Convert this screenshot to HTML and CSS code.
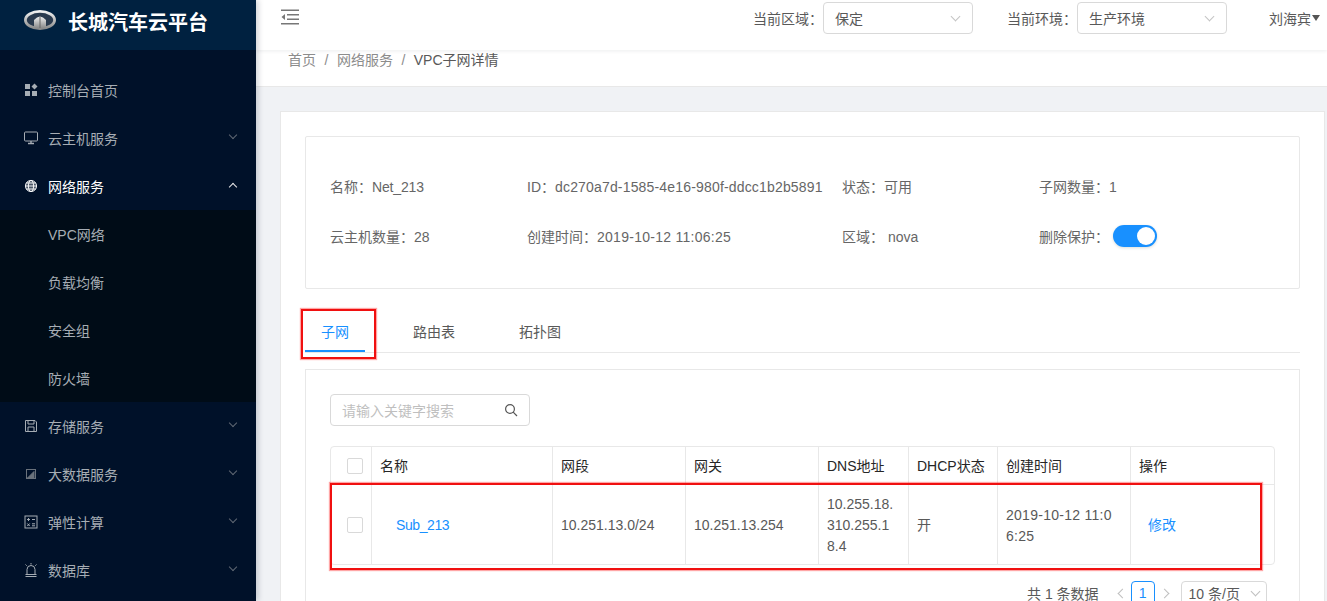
FILE: index.html
```html
<!DOCTYPE html>
<html lang="zh">
<head>
<meta charset="utf-8">
<title>长城汽车云平台</title>
<link rel="stylesheet" href="styles.css">
</head>
<body>
<div class="app">
  <aside class="sider">
    <div class="logo">
      <svg class="logo-mark" width="32" height="20" viewBox="0 0 32 20">
        <defs>
          <linearGradient id="lg" x1="0" y1="0" x2="0" y2="1"><stop offset="0" stop-color="#f0f0f0"/><stop offset="1" stop-color="#8a8a8a"/></linearGradient>
        </defs>
        <ellipse cx="16" cy="10" rx="14.6" ry="8.6" fill="#2a3a4e" stroke="url(#lg)" stroke-width="2.8"/>
        <path d="M10 18 V10 Q16 3 22 10 V18 Z" fill="url(#lg)"/>
        <path d="M16 6 V18" stroke="#666" stroke-width="1"/>
      </svg>
      <span class="logo-text">长城汽车云平台</span>
    </div>
    <nav class="menu">
      <a class="item"><svg class="ico" viewBox="0 0 14 14"><rect x="1" y="1" width="5" height="5" fill="#a6adb4"/><path d="M10.5 0.5 L13.5 3.5 L10.5 6.5 L7.5 3.5 Z" fill="#a6adb4"/><rect x="1" y="8" width="5" height="5" fill="#a6adb4"/><rect x="8" y="8" width="5" height="5" fill="#a6adb4"/></svg><span>控制台首页</span></a>
      <a class="item"><svg class="ico" viewBox="0 0 14 14" fill="none" stroke="#a6adb4"><rect x="0.5" y="1" width="13" height="9" rx="1"/><path d="M4 12.5 H10 M7 10 V12.5" stroke-width="1.4"/></svg><span>云主机服务</span><i class="caret"></i></a>
      <a class="item open"><svg class="ico" viewBox="0 0 14 14" fill="none" stroke="#fff" stroke-width="0.9"><circle cx="7" cy="7" r="5.6" fill="#d8dadc" fill-opacity="0.35"/><ellipse cx="7" cy="7" rx="2.6" ry="5.6"/><path d="M1.4 7 H12.6 M2.2 4 H11.8 M2.2 10 H11.8"/></svg><span>网络服务</span><i class="caret up"></i></a>
      <div class="sub">
        <a class="sub-item">VPC网络</a>
        <a class="sub-item">负载均衡</a>
        <a class="sub-item">安全组</a>
        <a class="sub-item">防火墙</a>
      </div>
      <a class="item"><svg class="ico" viewBox="0 0 14 14" fill="none" stroke="#a6adb4"><path d="M1.5 1.5 H11 L12.5 3 V12.5 H1.5 Z"/><path d="M4 1.5 V5 H10 V1.5 M4 12.5 V8 H10 V12.5"/></svg><span>存储服务</span><i class="caret"></i></a>
      <a class="item"><svg class="ico" viewBox="0 0 14 14" fill="none" stroke="#6a727c"><rect x="2.5" y="2.5" width="9" height="9"/><path d="M3.5 11 L10 4.5 V11 Z" fill="#6a727c"/></svg><span>大数据服务</span><i class="caret"></i></a>
      <a class="item"><svg class="ico" viewBox="0 0 14 14" fill="none" stroke="#a6adb4"><rect x="1" y="1" width="12" height="12"/><path d="M3 4.5 H6 M4.5 3 V6 M8 4.5 H11 M3.3 8.5 L5.7 11 M5.7 8.5 L3.3 11 M8 8.8 H11 M8 10.8 H11"/></svg><span>弹性计算</span><i class="caret"></i></a>
      <a class="item"><svg class="ico" viewBox="0 0 14 14" fill="none" stroke="#a6adb4"><path d="M3 11 V6.5 A4 4 0 0 1 11 6.5 V11 M1.5 11.5 H12.5 M1.5 13.5 H12.5 M7 0 V1.5 M1.5 1.5 L2.7 2.7 M12.5 1.5 L11.3 2.7"/></svg><span>数据库</span><i class="caret"></i></a>
    </nav>
  </aside>
  <div class="main">
    <header class="topbar">
      <svg class="fold" width="18" height="16" viewBox="0 0 18 16"><path d="M0 0.5 H18 V2 H0 Z M6 5 H18 V6.5 H6 Z M6 9.5 H18 V11 H6 Z M0 14 H18 V15.5 H0 Z M4 5 V11 L0.5 8 Z" fill="#777"/></svg>
      <div class="top-right">
        <label class="top-label">当前区域&#xFF1A;</label>
        <div class="select"><span>保定</span><i class="sel-caret"></i></div>
        <label class="top-label env">当前环境&#xFF1A;</label>
        <div class="select"><span>生产环境</span><i class="sel-caret"></i></div>
        <span class="user">刘海宾<i class="tri"></i></span>
      </div>
    </header>
    <div class="crumbs"><span>首页</span><em>/</em><span>网络服务</span><em>/</em><b>VPC子网详情</b></div>
    <div class="content">
      <section class="card">
        <div class="info">
          <div class="info-row">
            <div class="c1">名称&#xFF1A;<span class="tight">Net_213</span></div>
            <div class="c2">ID&#xFF1A;<span class="wide-id">dc270a7d-1585-4e16-980f-ddcc1b2b5891</span></div>
            <div class="c3">状态&#xFF1A;可用</div>
            <div class="c4">子网数量&#xFF1A;1</div>
          </div>
          <div class="info-row">
            <div class="c1">云主机数量&#xFF1A;28</div>
            <div class="c2">创建时间&#xFF1A;<span class="date">2019-10-12 11:06:25</span></div>
            <div class="c3">区域&#xFF1A;&nbsp;nova</div>
            <div class="c4 sw-wrap">删除保护&#xFF1A;<span class="switch"><i></i></span></div>
          </div>
        </div>
        <div class="tabs">
          <a class="tab active">子网</a>
          <a class="tab">路由表</a>
          <a class="tab">拓扑图</a>
          <span class="mark mark-tab"></span>
        </div>
        <div class="panel">
          <div class="search"><span>请输入关键字搜索</span>
            <svg width="14" height="14" viewBox="0 0 14 14" fill="none" stroke="#555" stroke-width="1.2"><circle cx="6" cy="6" r="4.4"/><path d="M9.2 9.2 L13 13"/></svg>
          </div>
          <div class="table-wrap">
            <table class="grid">
              <colgroup>
                <col class="w40"><col class="w181"><col class="w133"><col class="w133"><col class="w90"><col class="w89"><col class="w133"><col>
              </colgroup>
              <thead>
                <tr><th class="chk"><i class="box"></i></th><th>名称</th><th>网段</th><th>网关</th><th>DNS地址</th><th>DHCP状态</th><th>创建时间</th><th>操作</th></tr>
              </thead>
              <tbody>
                <tr>
                  <td class="chk"><i class="box"></i></td>
                  <td><a class="link name">Sub_213</a></td>
                  <td>10.251.13.0/24</td>
                  <td>10.251.13.254</td>
                  <td>10.255.18.310.255.18.4</td>
                  <td>开</td>
                  <td class="time">2019-10-12 11:06:25</td>
                  <td><a class="link act">修改</a></td>
                </tr>
              </tbody>
            </table>
            <span class="mark mark-row"></span>
          </div>
          <div class="pager">
            <span class="total">共 1 条数据</span>
            <i class="arrow left"></i>
            <span class="page">1</span>
            <i class="arrow right"></i>
            <span class="size">10 条/页<i class="sel-caret small"></i></span>
          </div>
        </div>
      </section>
    </div>
  </div>
</div>
</body>
</html>
```
FILE: styles.css
```css
* { box-sizing: border-box; }
html, body { margin: 0; height: 601px; overflow: hidden; }
body {
  font-family: "Liberation Sans", "Noto Sans CJK SC", sans-serif;
  font-size: 14px;
  color: #595959;
  background: #f0f2f5;
}
a { text-decoration: none; }
i, em { font-style: normal; }
.app { display: flex; height: 601px; }

.sider { width: 256px; flex: none; background: #001129; color: #a6adb4; box-shadow: 2px 0 6px rgba(0,21,41,.2); position: relative; z-index: 2; }
.logo { height: 50px; background: #002140; display: flex; align-items: center; padding: 0 0 8px 24px; }
.logo-mark { flex: none; margin-top: -3px; }
.logo-text { margin-left: 12px; font-size: 20px; font-weight: 700; color: #fff; }
.menu { padding-top: 16px; }
.item { display: flex; align-items: center; height: 48px; padding: 0 24px; color: #a6adb4; position: relative; }
.item.open { color: #fff; }
.ico { width: 14px; height: 14px; margin-right: 10px; flex: none; }
.caret { position: absolute; right: 20px; top: 18px; width: 6px; height: 6px; border-right: 1px solid #5f6873; border-bottom: 1px solid #5f6873; transform: rotate(45deg); }
.caret.up { top: 22px; border-color: #e8e8e8; transform: rotate(225deg); }
.sub { background: #000c17; }
.sub-item { display: block; height: 48px; line-height: 50px; padding-left: 48px; color: #a6adb4; }

.main { flex: 1; min-width: 0; display: flex; flex-direction: column; }
.topbar { height: 50px; flex: none; background: #fff; display: flex; align-items: flex-start; justify-content: space-between; padding: 9px 0 0 25px; box-shadow: 0 1px 4px rgba(0,21,41,.08); position: relative; z-index: 1; }
.fold { flex: none; }
.top-right { display: flex; align-items: center; height: 32px; margin-top: -7px; }
.top-label { color: #595959; }
.top-label.env { margin-left: 34px; }
.select { width: 150px; height: 32px; border: 1px solid #d9d9d9; border-radius: 4px; display: flex; align-items: center; justify-content: space-between; padding: 0 13px 0 11px; }
.sel-caret { display: block; width: 7px; height: 7px; border-right: 1px solid #c4c4c4; border-bottom: 1px solid #c4c4c4; transform: rotate(45deg); margin-top: -4px; }
.user { margin-left: 42px; width: 58px; white-space: nowrap; display: flex; align-items: center; }
.tri { display: block; border: 4px solid transparent; border-top: 6px solid #555; border-bottom: 0; margin-left: 1px; }

.crumbs { height: 37px; flex: none; background: #fff; border-bottom: 1px solid #e8e8e8; padding: 2px 0 0 32px; line-height: 16px; color: #8c8c8c; }
.crumbs em { margin: 0 8.5px; }
.crumbs b { font-weight: 400; color: #595959; }

.content { flex: 1; min-height: 0; padding: 24px 2px 0 24px; overflow: hidden; }
.card { background: #fff; border: 1px solid #e8e8e8; height: 520px; padding: 24px 24px 0; }
.info { width: 995px; height: 153px; border: 1px solid #e8e8e8; border-radius: 2px; padding-top: 24px; }
.info-row { display: flex; height: 50px; align-items: center; padding-left: 24px; color: #666; }
.c1 { width: 197px; flex: none; }
.c2 { width: 315px; flex: none; white-space: nowrap; }
.c3 { width: 197px; flex: none; }
.c4 { flex: none; }
.tight { letter-spacing: -.15px; }
.wide-id { letter-spacing: .17px; }
.date { letter-spacing: .27px; }
.sw-wrap { display: flex; align-items: center; }
.switch { width: 44px; height: 22px; border-radius: 11px; background: #1890ff; margin-left: 4px; position: relative; display: block; box-shadow: 0 1px 3px rgba(0,35,11,.15); }
.switch i { position: absolute; right: 2px; top: 2px; width: 18px; height: 18px; border-radius: 50%; background: #fff; }

.tabs { width: 995px; height: 64px; border-bottom: 1px solid #e8e8e8; display: flex; align-items: flex-end; position: relative; }
.tab { height: 41px; padding: 0 16px; line-height: 42px; margin-right: 32px; color: #595959; flex: none; }
.tab.active { color: #1890ff; border-bottom: 2px solid #1890ff; }
.mark { position: absolute; border: 2px solid #f01010; box-shadow: 0 0 1px 1px rgba(255,0,0,.35); pointer-events: none; }
.mark-tab { left: -4px; top: 20px; width: 75px; height: 50px; }

.panel { width: 995px; height: 300px; margin-top: 16px; border: 1px solid #e8e8e8; padding: 24px 24px 0; }
.search { width: 200px; height: 32px; border: 1px solid #d9d9d9; border-radius: 4px; display: flex; align-items: center; justify-content: space-between; padding: 0 11px; color: #bfbfbf; }
.table-wrap { position: relative; width: 945px; margin: 20px 0 0; border: 1px solid #e8e8e8; border-radius: 4px; }
.grid { width: 100%; border-collapse: collapse; table-layout: fixed; }
.w40 { width: 40px; }
.w181 { width: 181px; }
.w133 { width: 133px; }
.w90 { width: 90px; }
.w89 { width: 89px; }
th, td { border-right: 1px solid #e8e8e8; padding: 2px 8px 0 8.5px; text-align: left; word-break: break-all; line-height: 21px; }
th:last-child, td:last-child { border-right: 0; }
th { height: 37px; font-weight: 400; color: #262626; border-bottom: 1px solid #e8e8e8; }
td { height: 80px; color: #595959; padding-top: 3px; }
th.chk, td.chk { padding: 2px 0 0 16px; }
.box { display: block; width: 16px; height: 16px; border: 1px solid #d9d9d9; border-radius: 2px; background: #fff; }
.time { letter-spacing: .27px; padding-right: 11px; }
.link { color: #1890ff; }
.name { margin-left: 16px; letter-spacing: -.4px; }
.act { margin-left: 9px; }
.mark-row { left: -1px; top: 36px; width: 932px; height: 87px; }

.pager { display: flex; align-items: center; height: 24px; margin-top: 16px; padding-left: 697px; white-space: nowrap; }
.total { margin-right: 20px; }
.arrow { display: block; width: 7px; height: 7px; flex: none; border-left: 1px solid #bfbfbf; border-bottom: 1px solid #bfbfbf; transform: rotate(45deg); }
.arrow.right { transform: rotate(225deg); margin-right: 13px; }
.page { width: 24px; height: 24px; flex: none; border: 1px solid #1890ff; border-radius: 4px; color: #1890ff; text-align: center; line-height: 22px; margin: 0 6px 0 5px; }
.size { width: 86px; height: 24px; flex: none; border: 1px solid #d9d9d9; border-radius: 4px; display: flex; align-items: center; justify-content: space-between; padding: 0 7px; }
.sel-caret.small { border-color: #bfbfbf; }
```
